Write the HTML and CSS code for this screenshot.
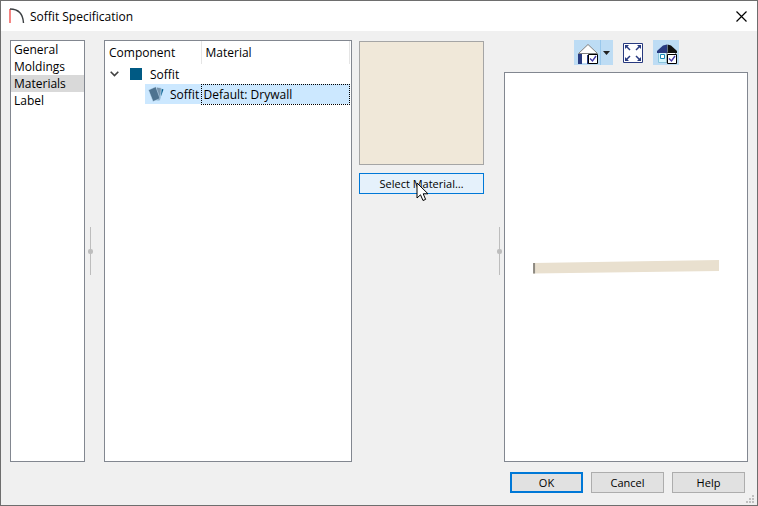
FILE: index.html
```
<!DOCTYPE html>
<html lang="en">

<head>
    <meta charset="UTF-8">
    <meta name="viewport" content="width=device-width, initial-scale=1.0">
    <title>Soffit Specification</title>
    <link rel="stylesheet" href="styles.css">
</head>

<body>
    <div class="dialog">
        <header class="titlebar">
            <svg class="logo" width="16" height="16" viewBox="0 0 16 16" fill="none">
                <path d="M1 1V15" stroke="#f0524f" stroke-width="1.4" />
                <path d="M1 1C9 1 14 6 14.5 15" stroke="#3c4043" stroke-width="1.4" />
            </svg>
            <h1>Soffit Specification</h1>
            <button type="button" class="close" aria-label="Close">
                <svg width="11" height="11" viewBox="0 0 11 11">
                    <path d="M.5 .5L10.500 10.500M10.500 .5L.5 10.500" stroke="#000" stroke-width="1.2" />
                </svg>
            </button>
        </header>

        <main class="content">
            <nav class="panel categories">
                <button type="button">General</button>
                <button type="button">Moldings</button>
                <button type="button" class="selected">Materials</button>
                <button type="button">Label</button>
            </nav>

            <div class="splitter"></div>

            <div class="panel tree">
                <table>
                    <thead>
                        <tr>
                            <th class="component">Component</th>
                            <th>Material</th>
                        </tr>
                    </thead>
                    <tbody>
                        <tr>
                            <td>
                                <div class="node">
                                    <button type="button" class="toggle" aria-label="Collapse">
                                        <svg width="9" height="6" viewBox="0 0 9 6" fill="none">
                                            <path d="M.7 .8L4.500 4.600L8.300 .8" stroke="#404040" stroke-width="1.6" />
                                        </svg>
                                    </button>
                                    <span class="color"></span>
                                    Soffit
                                </div>
                            </td>
                            <td></td>
                        </tr>
                        <tr>
                            <td>
                                <div class="node child">
                                    <svg width="16" height="16" viewBox="0 0 16 16">
                                        <path d="M12 2L15.500 3.500L11.500 14.500L7 14Z" fill="#07608f" />
                                        <path d="M8.500 1L13.500 2L12 14.500L7 14Z" fill="#7895ad" stroke="#cce8ff" stroke-width=".7" />
                                        <path d="M.5 4L7.800 .7L12 12.500L5 15.500Z" fill="#4e7390" stroke="#cce8ff" stroke-width=".5" />
                                    </svg>
                                    Soffit
                                </div>
                            </td>
                            <td class="focused">Default: Drywall</td>
                        </tr>
                    </tbody>
                </table>
            </div>

            <div class="material">
                <div class="swatch"></div>
                <button type="button" class="btn select-material">Select Material…</button>
                <svg class="cursor" width="13" height="20" viewBox="0 0 13 20">
                    <path d="M1 1V16L4.500 12.800L7 18.500L9.600 17.400L7.200 11.800H12Z" fill="#fff" stroke="#000" />
                </svg>
            </div>

            <div class="splitter right"></div>

            <section class="preview">
                <div class="toolbar">
                    <button type="button" class="tool active" aria-label="Camera view">
                        <svg width="26" height="25" viewBox="0 0 26 25">
                            <path d="M5 13L14 5L23 13V23H5Z" fill="#fff" />
                            <path d="M4 14H8V24H4ZM13 15H15V24H13Z" fill="#283a80" />
                            <path d="M4.500 13.500H23.500L14 4.500Z" fill="#fff" stroke="#808080" />
                            <path d="M14.500 14.500H23.500V23.500H14.500Z" fill="#fff" stroke="#000" />
                            <path d="M16 18.500L18.500 21L22 16" fill="none" stroke="#4338a8" stroke-width="1.4" />
                        </svg>
                    </button>
                    <button type="button" class="tool active arrow" aria-label="View options">
                        <svg width="7" height="4" viewBox="0 0 7 4">
                            <path d="M0 0H7L3.500 4Z" fill="#222" />
                        </svg>
                    </button>
                    <button type="button" class="tool fill" aria-label="Fill window">
                        <svg width="20" height="20" viewBox="0 0 20 20">
                            <path d="M.5 .5H19.500V19.500H.5Z" fill="#fff" stroke="#283a80" />
                            <path d="M2 2H6L2 6ZM18 2H14L18 6ZM2 18H6L2 14ZM18 18H14L18 14Z" fill="#283a80" />
                            <path d="M3 3L7 7M17 3L13 7M3 17L7 13M17 17L13 13" stroke="#283a80" stroke-width="1.5" />
                        </svg>
                    </button>
                    <button type="button" class="tool active" aria-label="Color">
                        <svg width="26" height="25" viewBox="0 0 26 25">
                            <path d="M5.500 12.500H14V22.500H5.500Z" fill="#d4f5fc" stroke="#8ac4dc" />
                            <path d="M14 12.500H22.500V23H14Z" fill="#fff" stroke="#888" />
                            <path d="M4 13V11L10 5.500L14 4.500V13Z" fill="#283a80" />
                            <path d="M14.500 4.500L18 5.500L24 11V13H14.500Z" fill="#111" />
                            <path d="M7.500 14.500H11.500V18.500H7.500Z" fill="#fff" stroke="#1686b5" />
                            <path d="M14.500 14.500H23.500V23.500H14.500Z" fill="#fff" stroke="#000" />
                            <path d="M16 18.500L18.500 21L22 16" fill="none" stroke="#4338a8" stroke-width="1.4" />
                        </svg>
                    </button>
                </div>
                <div class="panel view">
                    <svg class="model" viewBox="0 0 186 14">
                        <path d="M0 3L186 0V11L0 13.500Z" fill="#e9e0cf" />
                        <path d="M0 3H2V13.500H0Z" fill="#8d8a82" />
                    </svg>
                </div>
            </section>
        </main>

        <footer class="actions">
            <button type="button" class="btn default">OK</button>
            <button type="button" class="btn">Cancel</button>
            <button type="button" class="btn">Help</button>
            <svg class="grip" width="8" height="8" viewBox="0 0 8 8">
                <path d="M6 0h2v2h-2zM3 3h2v2h-2zM6 3h2v2h-2zM0 6h2v2h-2zM3 6h2v2h-2zM6 6h2v2h-2z" fill="#bfbfbf" />
            </svg>
        </footer>
    </div>
</body>

</html>
```
FILE: styles.css
```
* {
    margin: 0;
    padding: 0;
    box-sizing: border-box;
}

body {
    font-family: "Open Sans", "Noto Sans", sans-serif;
    font-size: 12px;
    line-height: 17px;
    color: #000;
}

button {
    font: inherit;
    color: inherit;
    border: none;
    background: none;
}

svg {
    display: block;
    flex-shrink: 0;
}

.dialog {
    display: flex;
    flex-direction: column;
    min-height: 100vh;
    border: 1px solid #6e6e6e;
    background-color: #f0f0f0;
}

/* title bar */
.titlebar {
    display: flex;
    align-items: center;
    height: 30px;
    padding: 0 10px 0 8px;
    background-color: #fff;
}

.titlebar h1 {
    flex: 1;
    margin-left: 5px;
    font-size: 12px;
    font-weight: 400;
}

.close {
    padding: 0;
}

/* main area */
.content {
    flex: 1;
    display: grid;
    grid-template-columns: 75px 19px 248px 132px 20px 1fr;
    padding: 9px 9px 0;
}

.panel {
    border: 1px solid #828790;
    background-color: #fff;
}

.categories button {
    display: block;
    width: 100%;
    padding-left: 3px;
    text-align: left;
}

.categories .selected {
    background-color: #d9d9d9;
}

.splitter {
    position: relative;
    align-self: center;
    justify-self: center;
    width: 1px;
    height: 48px;
    margin-right: 8px;
    background-color: #bdbdbd;
}

.splitter.right {
    margin-right: 0;
    margin-left: 10px;
}

.splitter::after {
    content: "";
    position: absolute;
    top: 22px;
    left: -2px;
    width: 5px;
    height: 5px;
    border-radius: 2px;
    background-color: #bdbdbd;
}

/* component tree */
.tree {
    padding-right: 1px;
}

.tree table {
    width: 100%;
    border-collapse: collapse;
    table-layout: fixed;
}

.tree th {
    height: 23px;
    padding-left: 4px;
    border-right: 1px solid #e5e5e5;
    font-weight: 400;
    text-align: left;
}

.tree th.component {
    width: 96px;
}

.tree td {
    height: 20px;
}

.node {
    display: flex;
    align-items: center;
    height: 20px;
    padding-left: 5px;
}

.toggle {
    width: 9px;
    margin-right: 11px;
}

.color {
    width: 12px;
    height: 12px;
    margin-right: 8px;
    background-color: #005a84;
}

.child {
    gap: 6px;
    margin-left: 40px;
    padding-left: 3px;
    background-color: #cce8ff;
}

.tree .focused {
    padding-left: 2px;
    border: 1px dotted #000;
    background-color: #cce8ff;
}

/* material picker */
.material {
    position: relative;
    display: flex;
    flex-direction: column;
    gap: 8px;
    padding: 1px 0 0 7px;
}

.swatch {
    height: 124px;
    border: 1px solid #a5a5a5;
    background-color: #f0e8d9;
}

.btn {
    height: 21px;
    border: 1px solid #adadad;
    background-color: #e1e1e1;
    font-size: 11px;
    line-height: 17px;
}

.select-material {
    border-color: #0078d7;
    background-color: #e5f1fb;
}

.cursor {
    position: absolute;
    top: 142px;
    left: 64px;
}

/* 3D preview */
.preview {
    display: flex;
    flex-direction: column;
    gap: 7px;
}

.toolbar {
    display: flex;
    justify-content: center;
    height: 25px;
}

.tool {
    display: flex;
    align-items: center;
    justify-content: center;
    width: 26px;
}

.tool.active {
    background-color: #bddcf4;
}

.tool.arrow {
    width: 13px;
    border-left: 1px solid #99c8ec;
}

.tool.fill {
    width: 20px;
    margin: 0 10px;
}

.view {
    flex: 1;
    display: flex;
    align-items: center;
    justify-content: center;
}

.model {
    width: 77%;
}

/* bottom buttons */
.actions {
    position: relative;
    display: flex;
    justify-content: flex-end;
    gap: 8px;
    padding: 10px 12px 12px;
}

.actions .btn {
    width: 73px;
}

.actions .default {
    border: 2px solid #0078d7;
}

.grip {
    position: absolute;
    right: 3px;
    bottom: 2px;
}
```
